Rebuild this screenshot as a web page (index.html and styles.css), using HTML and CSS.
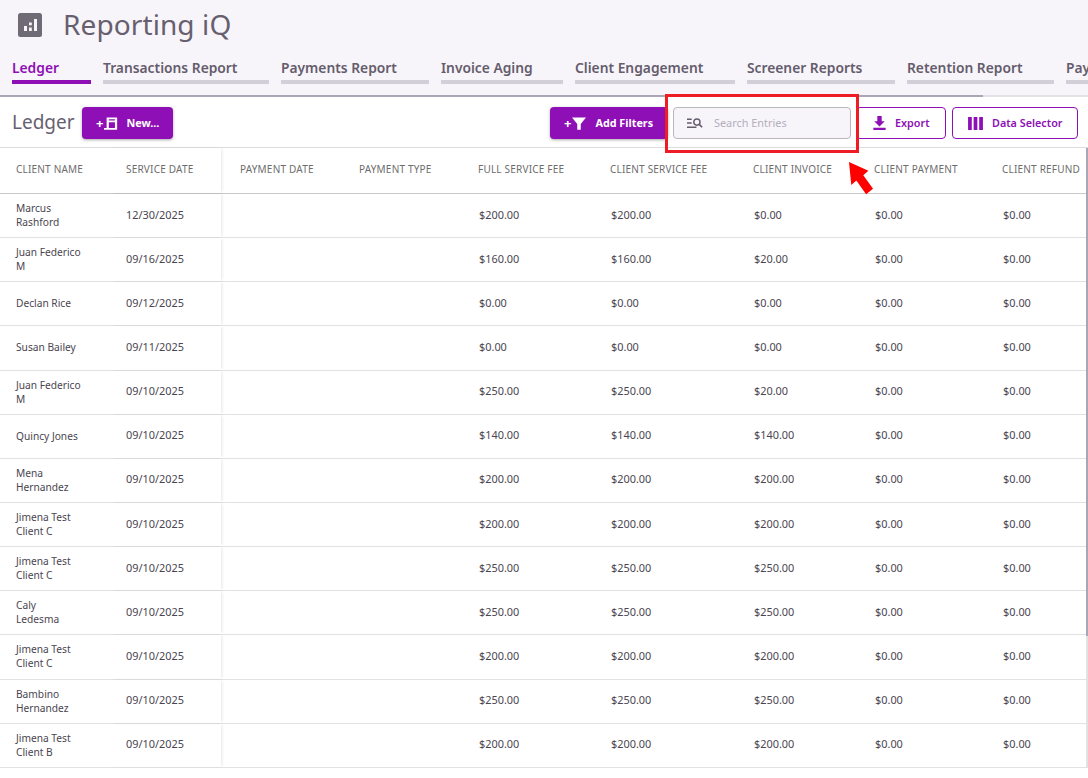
FILE: index.html
```html
<!DOCTYPE html>
<html lang="en">
<head>
<meta charset="utf-8">
<title>Reporting iQ</title>
<link rel="stylesheet" href="styles.css">
</head>
<body>
<div class="page">
  <header class="top">
    <div class="brand">
      <svg class="brand-icon" viewBox="0 0 24 24"><rect width="24" height="24" rx="2.5" fill="#6f6a75"/><rect x="6" y="13" width="3" height="5" fill="#f7f5f9"/><rect x="11" y="9.5" width="2.8" height="2.8" fill="#f7f5f9"/><rect x="11" y="14.5" width="2.8" height="3.5" fill="#f7f5f9"/><rect x="16" y="6" width="3" height="12" fill="#f7f5f9"/></svg>
      <h1 class="brand-title">Reporting iQ</h1>
    </div>
    <nav class="tabs">
      <a class="tab tab-active t1">Ledger</a>
      <a class="tab t2">Transactions Report</a>
      <a class="tab t3">Payments Report</a>
      <a class="tab t4">Invoice Aging</a>
      <a class="tab t5">Client Engagement</a>
      <a class="tab t6">Screener Reports</a>
      <a class="tab t7">Retention Report</a>
      <a class="tab t8">Payouts</a>
    </nav>
  </header>
  <div class="hscroll"><div class="hscroll-thumb"></div></div>
  <div class="toolbar">
    <h2 class="page-title">Ledger</h2>
    <button class="btn btn-solid btn-new">
      <span class="plus">+</span>
      <svg class="ic-new" viewBox="0 0 16 16"><path fill="#fff" fill-rule="evenodd" d="M3 1h12v14H0v-2h3zM5.500 3v1.500h7V3zM5.500 6.500V13h7V6.500z"/></svg>
      <span class="btn-label">New...</span>
    </button>
    <div class="spacer"></div>
    <button class="btn btn-solid btn-filter">
      <span class="plus">+</span>
      <svg class="ic-filter" viewBox="0 0 16 16"><path fill="#fff" d="M0 1h16L10 8.5V15H6V8.5z"/></svg>
      <span class="btn-label">Add Filters</span>
    </button>
    <div class="search">
      <svg class="ic-search" viewBox="0 0 18 12"><path fill="none" stroke="#655c6d" stroke-width="1.4" d="M0 2h5M0 6h5M0 10.500h10"/><circle cx="10.500" cy="5" r="3.300" fill="none" stroke="#655c6d" stroke-width="1.500"/><path stroke="#655c6d" stroke-width="1.800" d="M13 7.500l3 3"/></svg>
      <span class="search-text">Search Entries</span>
    </div>
    <button class="btn btn-line btn-export">
      <svg class="ic-export" viewBox="0 0 14 16"><path fill="#8e0fb5" d="M4.500 0h5v6H13L7 12 1 6h3.500zM0 13.500h14V16H0z"/></svg>
      <span class="btn-label">Export</span>
    </button>
    <button class="btn btn-line btn-data">
      <svg class="ic-data" viewBox="0 0 16 14"><path fill="#8e0fb5" d="M0 0h4v14H0zM6 0h4v14H6zM12 0h4v14h-4z"/></svg>
      <span class="btn-label">Data Selector</span>
    </button>
  </div>

  <div class="table">
    <div class="row head">
      <div class="cell">CLIENT NAME</div><div class="cell sticky">SERVICE DATE</div><div class="cell">PAYMENT DATE</div><div class="cell">PAYMENT TYPE</div><div class="cell">FULL SERVICE FEE</div><div class="cell">CLIENT SERVICE FEE</div><div class="cell">CLIENT INVOICE</div><div class="cell">CLIENT PAYMENT</div><div class="cell">CLIENT REFUND</div>
    </div>
    <div class="row">
      <div class="cell name">Marcus<br>Rashford</div><div class="cell sticky">12/30/2025</div><div class="cell"></div><div class="cell"></div><div class="cell">$200.00</div><div class="cell">$200.00</div><div class="cell">$0.00</div><div class="cell">$0.00</div><div class="cell">$0.00</div>
    </div>
    <div class="row">
      <div class="cell name">Juan Federico<br>M</div><div class="cell sticky">09/16/2025</div><div class="cell"></div><div class="cell"></div><div class="cell">$160.00</div><div class="cell">$160.00</div><div class="cell">$20.00</div><div class="cell">$0.00</div><div class="cell">$0.00</div>
    </div>
    <div class="row">
      <div class="cell name">Declan Rice</div><div class="cell sticky">09/12/2025</div><div class="cell"></div><div class="cell"></div><div class="cell">$0.00</div><div class="cell">$0.00</div><div class="cell">$0.00</div><div class="cell">$0.00</div><div class="cell">$0.00</div>
    </div>
    <div class="row">
      <div class="cell name">Susan Bailey</div><div class="cell sticky">09/11/2025</div><div class="cell"></div><div class="cell"></div><div class="cell">$0.00</div><div class="cell">$0.00</div><div class="cell">$0.00</div><div class="cell">$0.00</div><div class="cell">$0.00</div>
    </div>
    <div class="row">
      <div class="cell name">Juan Federico<br>M</div><div class="cell sticky">09/10/2025</div><div class="cell"></div><div class="cell"></div><div class="cell">$250.00</div><div class="cell">$250.00</div><div class="cell">$20.00</div><div class="cell">$0.00</div><div class="cell">$0.00</div>
    </div>
    <div class="row">
      <div class="cell name">Quincy Jones</div><div class="cell sticky">09/10/2025</div><div class="cell"></div><div class="cell"></div><div class="cell">$140.00</div><div class="cell">$140.00</div><div class="cell">$140.00</div><div class="cell">$0.00</div><div class="cell">$0.00</div>
    </div>
    <div class="row">
      <div class="cell name">Mena<br>Hernandez</div><div class="cell sticky">09/10/2025</div><div class="cell"></div><div class="cell"></div><div class="cell">$200.00</div><div class="cell">$200.00</div><div class="cell">$200.00</div><div class="cell">$0.00</div><div class="cell">$0.00</div>
    </div>
    <div class="row">
      <div class="cell name">Jimena Test<br>Client C</div><div class="cell sticky">09/10/2025</div><div class="cell"></div><div class="cell"></div><div class="cell">$200.00</div><div class="cell">$200.00</div><div class="cell">$200.00</div><div class="cell">$0.00</div><div class="cell">$0.00</div>
    </div>
    <div class="row">
      <div class="cell name">Jimena Test<br>Client C</div><div class="cell sticky">09/10/2025</div><div class="cell"></div><div class="cell"></div><div class="cell">$250.00</div><div class="cell">$250.00</div><div class="cell">$250.00</div><div class="cell">$0.00</div><div class="cell">$0.00</div>
    </div>
    <div class="row">
      <div class="cell name">Caly<br>Ledesma</div><div class="cell sticky">09/10/2025</div><div class="cell"></div><div class="cell"></div><div class="cell">$250.00</div><div class="cell">$250.00</div><div class="cell">$250.00</div><div class="cell">$0.00</div><div class="cell">$0.00</div>
    </div>
    <div class="row">
      <div class="cell name">Jimena Test<br>Client C</div><div class="cell sticky">09/10/2025</div><div class="cell"></div><div class="cell"></div><div class="cell">$200.00</div><div class="cell">$200.00</div><div class="cell">$200.00</div><div class="cell">$0.00</div><div class="cell">$0.00</div>
    </div>
    <div class="row">
      <div class="cell name">Bambino<br>Hernandez</div><div class="cell sticky">09/10/2025</div><div class="cell"></div><div class="cell"></div><div class="cell">$250.00</div><div class="cell">$250.00</div><div class="cell">$250.00</div><div class="cell">$0.00</div><div class="cell">$0.00</div>
    </div>
    <div class="row">
      <div class="cell name">Jimena Test<br>Client B</div><div class="cell sticky">09/10/2025</div><div class="cell"></div><div class="cell"></div><div class="cell">$200.00</div><div class="cell">$200.00</div><div class="cell">$200.00</div><div class="cell">$0.00</div><div class="cell">$0.00</div>
    </div>
    <div class="vscroll"><div class="vscroll-thumb"></div></div>
  </div>

  <div class="annot-box"></div>
  <svg class="annot-arrow" viewBox="0 0 30 40"><path fill="#fe0000" d="M2 1L23 10.500 17.500 15.500 28 30 20.500 36 10 21 4.500 26z"/></svg>
</div>
</body>
</html>
```

FILE: styles.css
```css
* { box-sizing: border-box; }
html, body { margin: 0; padding: 0; background: #fff; }
body {
  font-family: "Noto Sans", "Open Sans", sans-serif;
  color: #5e5666;
  overflow: hidden;
}
.page { position: relative; width: 1088px; height: 778px; overflow: hidden; }

.top { height: 95px; background: #f7f5f9; padding: 0 0 0 12px; overflow: hidden; }
.brand { display: flex; align-items: center; height: 50px; padding-left: 6px; }
.brand-icon { width: 24px; height: 24px; }
.brand-title { margin: -2px 0 0 21px; font-size: 28px; font-weight: 400; color: #675f70; line-height: 50px; letter-spacing: .1px; }

.tabs { display: flex; gap: 12px; width: 1200px; }
.tab {
  flex: none;
  height: 34px;
  padding-top: 7px;
  border-bottom: 4px solid #d3cfd9;
  font-size: 13.800px;
  font-weight: 600;
  line-height: 22px;
  color: #655c6d;
  white-space: nowrap;
}
.tab-active { color: #8e0fb5; border-bottom-color: #8e0fb5; }
.t1 { width: 79px; }
.t2 { width: 166px; }
.t3 { width: 148px; }
.t4 { width: 122px; }
.t5 { width: 160px; }
.t6 { width: 148px; }
.t7 { width: 147px; }
.t8 { width: 150px; }

.hscroll { height: 2px; background: #e4e2e7; }
.hscroll-thumb { width: 983px; height: 2px; background: #aaa6b5; }

.toolbar { display: flex; align-items: center; height: 50px; padding: 2px 10px 0 12px; }
.page-title { margin: 0 0 2px; font-size: 19px; font-weight: 400; color: #675f70; width: 70px; }
.spacer { flex: 1; }
.btn {
  display: flex;
  align-items: center;
  height: 32px;
  border-radius: 4px;
  font-family: inherit;
  font-size: 10.800px;
  font-weight: 700;
  padding: 0;
}
.btn-label, .search-text { margin-bottom: 2px; }
.btn-solid { background: #8e0fb5; color: #fff; border: 0; box-shadow: 0 1px 3px rgba(0,0,0,.35); }
.btn-line { background: #fff; color: #8e0fb5; border: 1px solid #8e0fb5; font-weight: 600; }
.plus { font-size: 13px; line-height: 1; }
.btn-new { width: 91px; padding-left: 14px; }
.ic-new { width: 14px; height: 15px; margin: 0 8px 0 1px; }
.btn-filter { width: 118px; padding-left: 14px; }
.ic-filter { width: 14px; height: 15px; margin: 0 9px 0 1px; }
.search {
  display: flex;
  align-items: center;
  width: 178px;
  height: 32px;
  margin-left: 5px;
  padding-left: 13px;
  background: #f7f5f9;
  border: 1px solid #b9b7bd;
  border-radius: 4px;
}
.ic-search { width: 17px; height: 12px; margin-right: 10px; }
.search-text { font-size: 10.900px; color: #b5aebd; }
.btn-export { width: 90px; margin-left: 5px; padding-left: 16px; }
.ic-export { width: 13px; height: 14px; margin-right: 9px; }
.btn-data { width: 126px; margin-left: 6px; padding-left: 15px; }
.ic-data { width: 15px; height: 13px; margin-right: 9px; }

.table { position: relative; border-top: 1px solid #dcdcdc; }
.row {
  display: grid;
  grid-template-columns: 110px 111px 122px 119px 132px 143px 121px 128px 1fr;
  height: 44.150px;
  border-bottom: 1px solid #e2e2e2;
  font-size: 10.900px;
  color: #4a4550;
}
.head { height: 46px; border-bottom-color: #c8c8c8; font-size: 10px; color: #6d6d6d; letter-spacing: .2px; }
.cell { display: flex; align-items: center; padding: 0 0 3px 17px; white-space: nowrap; }
.head .cell { padding-left: 16px; }
.row .cell:nth-child(2) { padding-left: 16px; }
.row .cell:nth-child(3) { padding-left: 19px; }
.name { font-size: 10.200px; line-height: 14px; padding: 0 0 1px 16px; }
.sticky { box-shadow: 2px 0 3px -1px rgba(0,0,0,.1); }

.vscroll { position: absolute; top: 0; right: 0; width: 2px; height: 620px; background: #e2e2e2; }
.vscroll-thumb { width: 2px; height: 488px; background: #aaa6b5; }

.annot-box { position: absolute; left: 665px; top: 94px; width: 194px; height: 59px; border: 3px solid #ee1c25; }
.annot-arrow { position: absolute; left: 847px; top: 161px; width: 28px; height: 37px; }
```
